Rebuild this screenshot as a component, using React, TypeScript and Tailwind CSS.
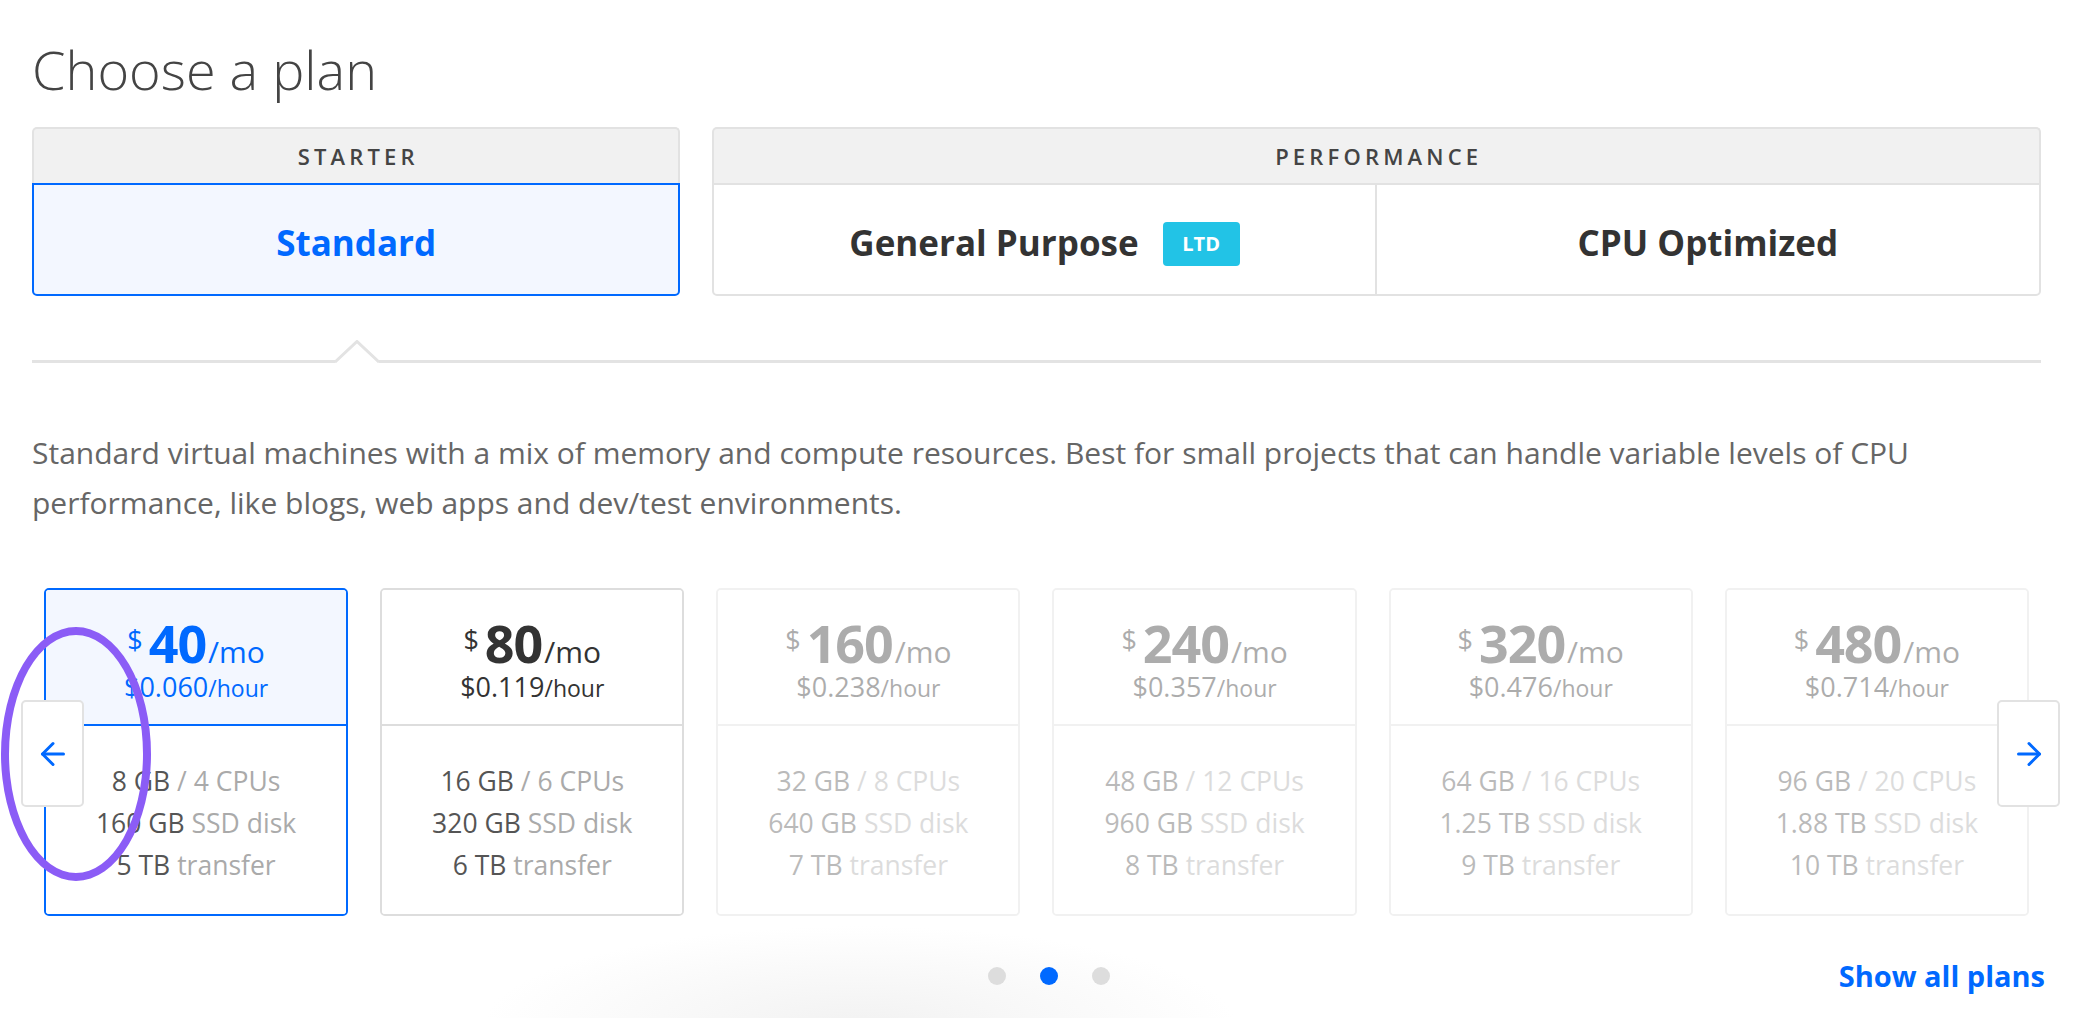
import React from 'react'
import { ArrowLeft, ArrowRight } from 'lucide-react'

// Plan cards shown in the carousel (second page of three)
const plans = [
  { mo: '40', hour: '0.060', ram: '8 GB', cpu: '4 CPUs', disk: '160 GB', transfer: '5 TB' },
  { mo: '80', hour: '0.119', ram: '16 GB', cpu: '6 CPUs', disk: '320 GB', transfer: '6 TB' },
  { mo: '160', hour: '0.238', ram: '32 GB', cpu: '8 CPUs', disk: '640 GB', transfer: '7 TB' },
  { mo: '240', hour: '0.357', ram: '48 GB', cpu: '12 CPUs', disk: '960 GB', transfer: '8 TB' },
  { mo: '320', hour: '0.476', ram: '64 GB', cpu: '16 CPUs', disk: '1.25 TB', transfer: '9 TB' },
  { mo: '480', hour: '0.714', ram: '96 GB', cpu: '20 CPUs', disk: '1.88 TB', transfer: '10 TB' },
]

function PlanCard({ plan, index }: { plan: (typeof plans)[number]; index: number }) {
  const selected = index === 0
  const faded = index > 1

  return (
    <div
      className={
        'flex flex-col overflow-hidden rounded-[5px] border-2 ' +
        (selected ? 'border-[#0069ff]' : 'border-[#dddddd]') +
        (faded ? ' opacity-40' : '')
      }
    >
      <div
        className={
          'flex h-[136px] flex-col items-center pt-[31px] border-b-2 ' +
          (selected ? 'bg-[#f3f7ff] border-[#0069ff] text-[#0069ff]' : 'bg-white border-[#dddddd] text-[#333333]')
        }
      >
        <div className="flex items-baseline leading-[44px]">
          <span className="relative -top-[13px] mr-[6px] text-[27px]">$</span>
          <span className="text-[52px] font-bold tracking-[-0.02em]">{plan.mo}</span>
          <span className="ml-[2px] text-[30px]">/mo</span>
        </div>
        <div className="flex items-baseline leading-[23px]">
          <span className="text-[27px]">${plan.hour}</span>
          <span className="text-[23px]">/hour</span>
        </div>
      </div>
      <div className="flex flex-1 flex-col items-center justify-center bg-white pt-[5px] text-[26.5px] leading-[42px] text-[#555555]">
        <div>
          {plan.ram} <span className="text-[#aaaaaa]">/ {plan.cpu}</span>
        </div>
        <div>
          {plan.disk} <span className="text-[#aaaaaa]">SSD disk</span>
        </div>
        <div>
          {plan.transfer} <span className="text-[#aaaaaa]">transfer</span>
        </div>
      </div>
    </div>
  )
}

export default function App() {
  return (
    <div className="relative min-h-[1018px] w-[2090px] overflow-hidden bg-white pl-[32px] pr-[49px] pt-[39px] font-['Open_Sans',sans-serif]">
      {/* faint glow under the pager */}
      <div className="pointer-events-none absolute left-[480px] top-[925px] h-[200px] w-[760px] bg-[radial-gradient(ellipse_at_center,#f2f2f2_0%,rgba(255,255,255,0)_70%)]" />

      <h1 className="text-[54px] font-light leading-[60px] text-[#444444]">Choose a plan</h1>

      {/* plan type tabs */}
      <div className="mt-[28px] grid grid-cols-3 gap-8">
        <div className="flex flex-col">
          <div className="flex h-[56px] items-center justify-center rounded-t-[5px] border-2 border-b-0 border-[#e2e2e2] bg-[#f1f1f1] pl-[0.19em] text-[22px] font-semibold tracking-[0.19em] text-[#444444]">
            STARTER
          </div>
          <div className="flex h-[113px] items-center justify-center rounded-b-[5px] border-2 border-[#0069ff] bg-[#f3f7ff] pt-[8px] text-[35px] font-bold text-[#0069ff]">
            Standard
          </div>
        </div>
        <div className="col-span-2 flex flex-col">
          <div className="flex h-[56px] items-center justify-center rounded-t-[5px] border-2 border-b-0 border-[#e2e2e2] bg-[#f1f1f1] pl-[0.19em] text-[22px] font-semibold tracking-[0.19em] text-[#444444]">
            PERFORMANCE
          </div>
          <div className="grid h-[113px] grid-cols-2 rounded-b-[5px] border-2 border-[#e2e2e2] bg-white">
            <div className="flex items-center justify-center gap-[24px] border-r-2 border-[#e2e2e2] pt-[8px] text-[35px] font-bold text-[#333333]">
              General Purpose
              <span className="flex h-[44px] w-[77px] items-center justify-center rounded-[4px] bg-[#22c3e6] text-[20px] font-bold text-white">
                LTD
              </span>
            </div>
            <div className="flex items-center justify-center pt-[8px] text-[35px] font-bold text-[#333333]">
              CPU Optimized
            </div>
          </div>
        </div>
      </div>

      {/* separator with caret under the active tab */}
      <div className="relative mt-[45px] h-[22px]">
        <div className="absolute bottom-0 left-0 right-0 h-[3px] bg-[#e3e3e3]" />
        <svg className="absolute bottom-0 left-[302px]" width="46" height="23" viewBox="0 0 46 23">
          <polygon points="1,23 23,1.5 45,23" fill="white" />
          <polyline points="1,22 23,1.5 45,22" fill="none" stroke="#e3e3e3" strokeWidth="3" />
        </svg>
      </div>

      <p className="mt-[65px] max-w-[1930px] text-[30px] leading-[50px] text-[#666666]">
        Standard virtual machines with a mix of memory and compute resources. Best for small projects that can handle
        variable levels of CPU performance, like blogs, web apps and dev/test environments.
      </p>

      {/* plan carousel */}
      <div className="relative mt-[60px]">
        <div className="grid h-[328px] grid-cols-6 gap-8 px-3">
          {plans.map((plan, i) => (
            <PlanCard key={plan.mo} plan={plan} index={i} />
          ))}
        </div>
        <button
          type="button"
          className="absolute left-[-11px] top-[112px] flex h-[107px] w-[63px] items-center justify-center rounded-[5px] border-2 border-[#e2e2e2] bg-white text-[#0069ff]"
        >
          <ArrowLeft size={36} strokeWidth={2} />
        </button>
        <button
          type="button"
          className="absolute right-[-19px] top-[112px] flex h-[107px] w-[63px] items-center justify-center rounded-[5px] border-2 border-[#e2e2e2] bg-white text-[#0069ff]"
        >
          <ArrowRight size={36} strokeWidth={2} />
        </button>
      </div>

      {/* pager + show all */}
      <div className="relative mt-[40px] flex h-[40px] items-center justify-center">
        <div className="ml-6 flex items-center gap-[34px]">
          <span className="h-[18px] w-[18px] rounded-full bg-[#dddddd]" />
          <span className="h-[18px] w-[18px] rounded-full bg-[#0069ff]" />
          <span className="h-[18px] w-[18px] rounded-full bg-[#dddddd]" />
        </div>
        <a className="absolute right-[-4px] text-[29px] font-bold text-[#0069ff]">Show all plans</a>
      </div>

      {/* hand-drawn annotation around the back arrow */}
      <div className="pointer-events-none absolute left-[1px] top-[627px] h-[254px] w-[150px] rounded-[50%] border-[8px] border-[#8b5cf6]" />
    </div>
  )
}
